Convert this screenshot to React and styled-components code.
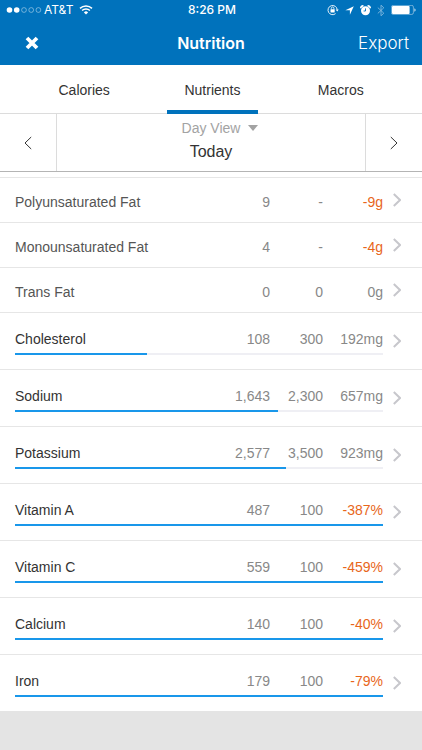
import React, { useState } from 'react'
import styled, { createGlobalStyle } from 'styled-components'

const nutrients = [
    { name: 'Polyunsaturated Fat', total: '9', goal: '-', left: '-9g', sub: true, over: true },
    { name: 'Monounsaturated Fat', total: '4', goal: '-', left: '-4g', sub: true, over: true },
    { name: 'Trans Fat', total: '0', goal: '0', left: '0g', sub: true },
    { name: 'Cholesterol', total: '108', goal: '300', left: '192mg', percent: 36 },
    { name: 'Sodium', total: '1,643', goal: '2,300', left: '657mg', percent: 71.4 },
    { name: 'Potassium', total: '2,577', goal: '3,500', left: '923mg', percent: 73.6 },
    { name: 'Vitamin A', total: '487', goal: '100', left: '-387%', percent: 100, over: true },
    { name: 'Vitamin C', total: '559', goal: '100', left: '-459%', percent: 100, over: true },
    { name: 'Calcium', total: '140', goal: '100', left: '-40%', percent: 100, over: true },
    { name: 'Iron', total: '179', goal: '100', left: '-79%', percent: 100, over: true },
]

const tabs = ['Calories', 'Nutrients', 'Macros']

const Chevron = ({ left, ...rest }) => (
    <svg width="8" height="14" viewBox="0 0 8 14" fill="none" stroke="currentColor" aria-hidden="true" {...rest}>
        <path d={left ? 'M7.2 1 1 7l6.2 6' : 'M.8 1 7 7 .8 13'} />
    </svg>
)

export default function App() {
    const [activeTab, setActiveTab] = useState('Nutrients');
    const [view, setView] = useState('Day View');

    return (
        <>
            <GlobalStyle />
            <Header>
                <StatusBar>
                    <Carrier>
                        <svg width="36" height="8" viewBox="0 0 36 8" fill="none" stroke="#fff" aria-hidden="true">
                            <circle cx="3.5" cy="4" r="2.8" fill="#fff" stroke="none" />
                            <circle cx="10.7" cy="4" r="2.8" fill="#fff" stroke="none" />
                            <circle cx="18" cy="4" r="2.4" strokeWidth=".6" opacity=".7" />
                            <circle cx="25.2" cy="4" r="2.4" strokeWidth=".6" opacity=".7" />
                            <circle cx="32.4" cy="4" r="2.4" strokeWidth=".6" opacity=".7" />
                        </svg>
                        <span>AT&amp;T</span>
                        <svg width="14" height="10" viewBox="0 0 14 10" fill="none" stroke="#fff" aria-hidden="true">
                            <path d="M1 3.4a8.5 8.5 0 0 1 12 0" strokeWidth="1.5" />
                            <path d="M3.1 5.6a5.5 5.5 0 0 1 7.8 0" strokeWidth="1.4" />
                            <path d="M7 9.6 4.9 7.4a3 3 0 0 1 4.2 0z" fill="#fff" stroke="none" />
                        </svg>
                    </Carrier>
                    <Time>8:26 PM</Time>
                    <Indicators>
                        <svg width="12" height="12" viewBox="0 0 12 12" fill="none" stroke="#fff" aria-hidden="true">
                            <path d="M10.2 5.6A4.6 4.6 0 1 0 8.6 9.6" strokeWidth=".9" />
                            <path d="M8.7 5.6h3L10.2 7.6z" fill="#fff" stroke="none" />
                            <path d="M4.3 5.4V4.3a1.3 1.3 0 0 1 2.6 0v1.1" strokeWidth=".8" />
                            <rect x="3.5" y="5.2" width="4.2" height="3.2" rx=".4" fill="#fff" stroke="none" />
                        </svg>
                        <svg width="9" height="9" viewBox="0 0 9 9" fill="#fff" aria-hidden="true">
                            <path d="M8.8.3 4.9 8.8V4.3H.4z" />
                        </svg>
                        <svg width="11" height="11" viewBox="0 0 11 11" aria-hidden="true">
                            <path d="M.8 3.2A2.2 2.2 0 0 1 3.4.9M10.2 3.2A2.2 2.2 0 0 0 7.6.9" fill="none" stroke="#fff" strokeWidth="1.6" />
                            <circle cx="5.5" cy="5.8" r="4.5" fill="#fff" />
                            <path d="M5.5 3.4V6H3.6" fill="none" stroke="#0072bc" strokeWidth=".9" />
                        </svg>
                        <svg width="8" height="13" viewBox="0 0 8 13" fill="none" stroke="#fff" strokeWidth=".9" opacity=".5" aria-hidden="true">
                            <path d="m.8 3.6 6 5.6L4 11.8V1.2l2.8 2.6-6 5.6" />
                        </svg>
                        <svg width="25" height="10" viewBox="0 0 25 10" aria-hidden="true">
                            <rect x=".4" y=".4" width="22" height="9" rx="1.6" fill="none" stroke="#fff" strokeWidth=".6" opacity=".7" />
                            <rect x="1" y="1" width="17.6" height="8" rx="1" fill="#fff" />
                            <path d="M23.4 3.3a1.8 1.8 0 0 1 0 3.4z" fill="#fff" opacity=".8" />
                        </svg>
                    </Indicators>
                </StatusBar>
                <NavBar>
                    <CloseButton aria-label="Close">
                        <svg width="14" height="14" viewBox="0 0 14 14" fill="none" stroke="#fff" strokeWidth="3.8" aria-hidden="true">
                            <path d="m2 2 10 10M12 2 2 12" />
                        </svg>
                    </CloseButton>
                    <Title>Nutrition</Title>
                    <ExportButton>Export</ExportButton>
                </NavBar>
            </Header>
            <Tabs>
                {tabs.map((tab) => (
                    <Tab key={tab} $active={tab === activeTab} onClick={() => setActiveTab(tab)}>{tab}</Tab>
                ))}
            </Tabs>
            <DateBar>
                <DateButton aria-label="Previous day"><Chevron left /></DateButton>
                <DateInfo>
                    <ViewPicker>
                        <select aria-label="View" value={view} onChange={(e) => setView(e.target.value)}>
                            <option>Day View</option>
                            <option>Week View</option>
                        </select>
                        <svg width="10" height="6" viewBox="0 0 10 6" fill="#a3a3a3" aria-hidden="true">
                            <path d="M0 0h10L5 6z" />
                        </svg>
                    </ViewPicker>
                    <Today>Today</Today>
                </DateInfo>
                <DateButton aria-label="Next day"><Chevron /></DateButton>
            </DateBar>
            <List>
                <Table aria-label="Nutrients">
                    <tbody>
                        {nutrients.map((item) => (
                            <Row key={item.name} $sub={item.sub}>
                                <Name scope="row" $sub={item.sub}>{item.name}</Name>
                                <Value>{item.total}</Value>
                                <Value>{item.goal}</Value>
                                <Value $over={item.over}>{item.left}</Value>
                                <More $sub={item.sub}>
                                    <button aria-label={item.name}><Chevron strokeWidth="2" /></button>
                                </More>
                                {!item.sub && (
                                    <BarCell>
                                        <Fill style={{ width: `${item.percent}%` }} />
                                    </BarCell>
                                )}
                            </Row>
                        ))}
                    </tbody>
                </Table>
            </List>
        </>
    )
}

const GlobalStyle = createGlobalStyle`
    * {
        box-sizing: border-box;
    }
    body {
        margin: 0;
        background-color: #e4e4e4;
        color: #333;
        font-family: "Liberation Sans", Arial, sans-serif;
        font-size: 14px;
        line-height: 20px;
    }
    button, select {
        margin: 0;
        padding: 0;
        border: none;
        background: none;
        color: inherit;
        font: inherit;
        cursor: pointer;
    }
    svg {
        display: block;
        flex-shrink: 0;
    }
`

const Header = styled.header`
    background-color: #0072bc;
    color: #fff;
    font-family: Inter, sans-serif;
`

const StatusBar = styled.div`
    display: grid;
    grid-template-columns: 1fr auto 1fr;
    align-items: center;
    height: 20px;
    padding: 0 6px;
    font-size: 12px;
`

const Carrier = styled.div`
    display: flex;
    align-items: center;
    gap: 2px;
    span {
        margin-right: 4px;
    }
`

const Time = styled.div`
    padding-left: 2px;
    font-weight: 500;
`

const Indicators = styled.div`
    display: flex;
    align-items: center;
    justify-content: flex-end;
    gap: 6px;
`

const NavBar = styled.div`
    display: grid;
    grid-template-columns: 1fr auto 1fr;
    align-items: center;
    height: 45px;
    padding: 0 13px;
`

const CloseButton = styled.button`
    justify-self: start;
    padding: 12px;
`

const Title = styled.h1`
    margin: 0;
    font-size: 16px;
    font-weight: 600;
`

const ExportButton = styled.button`
    justify-self: end;
    font-size: 17px;
    font-weight: 300;
`

const Tabs = styled.nav`
    display: grid;
    grid-template-columns: repeat(3, 1fr);
    justify-items: center;
    padding: 0 17px 0 20px;
    background-color: #fff;
    box-shadow: inset 0 -1px #dcdcdc;
`

const Tab = styled.button`
    height: 49px;
    padding: 5px 17px 0;
    border-bottom: 4px solid ${({ $active }) => ($active ? '#0072bc' : 'transparent')};
`

const DateBar = styled.div`
    display: grid;
    grid-template-columns: 56px 1fr 56px;
    height: 58px;
    background-color: #fff;
    border-bottom: 1px solid #b4b4b4;
`

const DateButton = styled.button`
    display: grid;
    place-items: center;
`

const DateInfo = styled.div`
    display: flex;
    flex-direction: column;
    align-items: center;
    padding-top: 4px;
    border: solid #dcdcdc;
    border-width: 0 1px;
`

const ViewPicker = styled.div`
    display: grid;
    align-items: center;
    color: #a3a3a3;
    select {
        grid-area: 1 / 1;
        width: 94px;
        appearance: none;
        text-align: center;
        text-align-last: center;
    }
    svg {
        grid-area: 1 / 1;
        justify-self: end;
        pointer-events: none;
    }
`

const Today = styled.div`
    font-size: 16px;
    line-height: 28px;
`

const List = styled.main`
    padding-top: 5px;
    background-color: #fff;
`

const Table = styled.table`
    display: block;
    border-top: 1px solid #e6e6e6;
    tbody {
        display: block;
    }
    th, td {
        padding: 0;
    }
`

const Row = styled.tr`
    display: grid;
    grid-template-columns: 1fr 53px 53px 60px 39px;
    grid-template-rows: ${({ $sub }) => ($sub ? '44px' : '40px 2px 14px')};
    border-bottom: 1px solid #e6e6e6;
    line-height: ${({ $sub }) => ($sub ? 48 : 52)}px;
    &:last-child {
        border-bottom: none;
    }
`

const Name = styled.th`
    && {
        padding-left: 15px;
    }
    color: ${({ $sub }) => ($sub ? '#555' : '#333')};
    font-weight: 400;
    text-align: left;
`

const Value = styled.td`
    color: ${({ $over }) => ($over ? '#e8661b' : '#888')};
    text-align: right;
    white-space: nowrap;
`

const More = styled.td`
    grid-column: 5;
    grid-row: 1 / ${({ $sub }) => ($sub ? 2 : 4)};
    display: flex;
    color: #c7c7cc;
    button {
        display: flex;
        flex: 1;
        align-items: center;
        padding-left: 10px;
    }
`

const BarCell = styled.td`
    grid-column: 1 / 5;
    grid-row: 2;
    margin-left: 15px;
    background-color: #efeff4;
`

const Fill = styled.div`
    height: 2px;
    background-color: #1997ea;
`
